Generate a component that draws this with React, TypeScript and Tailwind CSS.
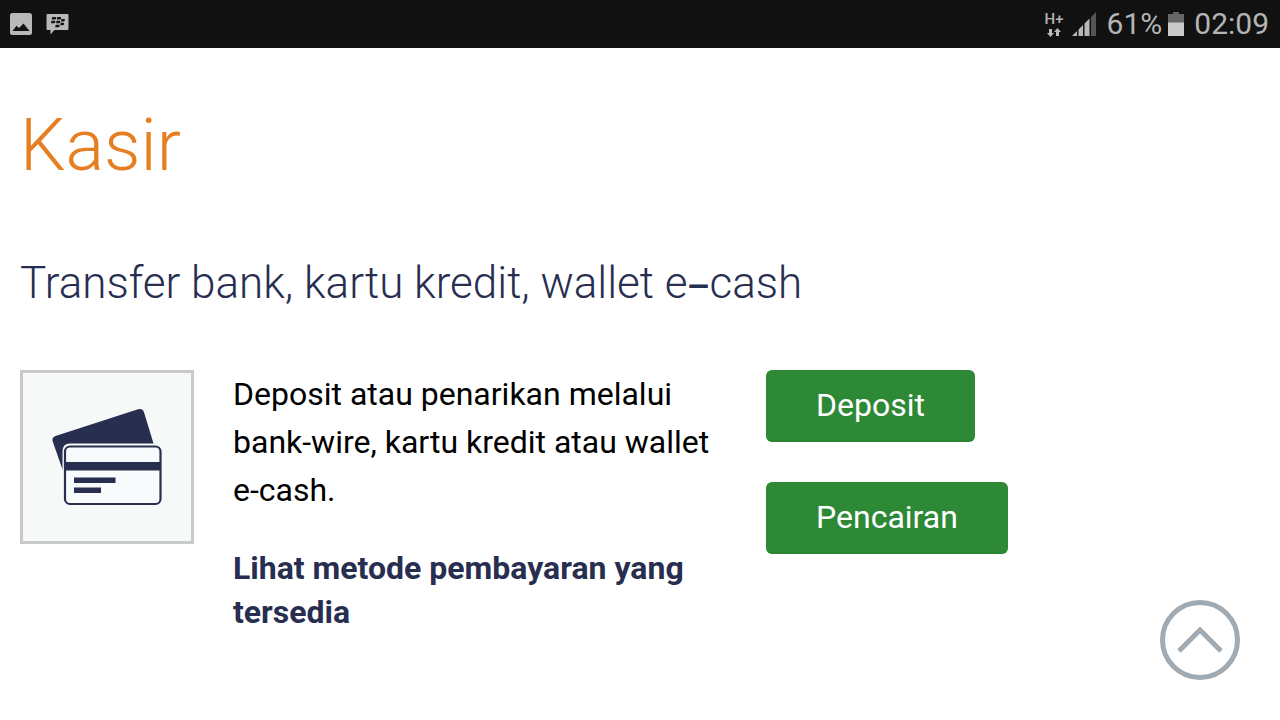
const actions = [
  { id: 1, label: "Deposit" },
  { id: 2, label: "Pencairan" },
];

function PictureIcon() {
  return (
    <svg width="22" height="22" viewBox="0 0 22 22" aria-hidden="true">
      <rect width="22" height="22" rx="2.5" fill="#b8b8b8" />
      <path
        d="M2.500 18 6.500 12.800 9 15 13.500 10.500 19.500 18Z"
        fill="#121212"
      />
    </svg>
  );
}

function MessengerIcon() {
  return (
    <svg width="24" height="22" viewBox="0 0 24 22" aria-hidden="true">
      <path
        d="M1.500 1H21.500Q22.500 1 22.500 2V16Q22.500 17 21.500 17H8.500L4.500 21.500V17H1.500Q.5 17 .5 16V2Q.5 1 1.500 1Z"
        fill="#b8b8b8"
      />
      <g fill="#121212">
        <path d="M6.300 4h3q1.200 0 .9 1.200-.3 1.300-1.600 1.300H5.800Z" />
        <path d="M11.300 4h3q1.200 0 .9 1.200-.3 1.300-1.600 1.300h-2.800Z" />
        <path d="M5.500 7.800h3q1.200 0 .9 1.200-.3 1.300-1.600 1.300H5Z" />
        <path d="M10.500 7.800h3q1.200 0 .9 1.200-.3 1.300-1.600 1.300H10Z" />
        <path d="M15.500 6h2.500q1.200 0 .9 1.200-.3 1.300-1.600 1.300H15Z" />
        <path d="M14.700 9.800h2.500q1.200 0 .9 1.200-.3 1.300-1.600 1.300h-2.300Z" />
        <path d="M9.700 11.700h3q1.200 0 .9 1.200-.3 1.300-1.600 1.300H9.200Z" />
      </g>
    </svg>
  );
}

function DataArrowsIcon() {
  return (
    <svg width="14" height="9" viewBox="0 0 14 9" fill="#b9b9b9" aria-hidden="true">
      <path d="M2 1H5V5H7L3.500 9 0 5H2Z" />
      <path d="M9 8H12V4H14L10.500 0 7 4H9Z" />
    </svg>
  );
}

function SignalIcon() {
  return (
    <svg width="24" height="24" viewBox="0 0 24 24" aria-hidden="true">
      <path d="M0 24 5 19V24ZM6.500 17.500 11 13V24H6.500ZM12.500 11.500 17.500 6.500V24H12.500Z" fill="#b9b9b9" />
      <path d="M19 5 24 0V24H19Z" fill="#555" />
    </svg>
  );
}

function BatteryIcon() {
  return (
    <svg width="16" height="24" viewBox="0 0 16 24" aria-hidden="true">
      <path d="M5 0H11V2H16V11H0V2H5Z" fill="#666" />
      <path d="M0 10.500H16V24H0Z" fill="#c9c9c9" />
    </svg>
  );
}

function CardsIcon() {
  return (
    <svg width="110" height="98" viewBox="0 0 110 98" aria-hidden="true">
      <path
        d="M10.500 61.500.7 33.500Q-.5 29.500 3.500 28L86 1.300Q90.500 0 92 4.300L101.500 35.500H18Q10.500 35.500 10.500 43.500Z"
        fill="#282e50"
      />
      <rect x="13" y="38.500" width="95.500" height="57.500" rx="5" fill="#f8fbfb" stroke="#282e50" strokeWidth="2.200" />
      <path d="M13 54H108.500V62.500H13ZM22 69.500H63.500V75H22ZM22 79.500H49V85H22Z" fill="#282e50" />
    </svg>
  );
}

function StatusBar() {
  return (
    <header className="flex h-12 items-center justify-between bg-[#111111] pr-[11px] pl-2.5 text-[#b4b4b4]">
      <div className="flex items-center gap-3.5">
        <PictureIcon />
        <MessengerIcon />
      </div>
      <div className="flex items-center text-[30px] leading-none">
        <div className="mr-2 flex flex-col items-center gap-0.5">
          <span className="text-[15px] leading-3.5 font-medium">H+</span>
          <DataArrowsIcon />
        </div>
        <SignalIcon />
        <span className="ml-[11px]">61%</span>
        <span className="mr-2.5 ml-1.5">
          <BatteryIcon />
        </span>
        <time>02:09</time>
      </div>
    </header>
  );
}

export default function App() {
  return (
    <div className="min-h-screen bg-white font-[Roboto,sans-serif]">
      <StatusBar />

      <main className="px-5 pt-[58px]">
        <h1 className="text-[72px] leading-20 font-light text-[#e67e22]">Kasir</h1>
        <h2 className="mt-[69px] text-[44px] leading-14 font-light text-[#282e50]">
          Transfer bank, kartu kredit, wallet e<span className="font-['Noto_Sans',sans-serif] leading-none font-normal">–</span>cash
        </h2>

        <section className="mt-[59px] grid grid-cols-[3fr_2fr] gap-x-[5px]">
          <div className="flex items-start gap-[39px] pr-8">
            <div className="flex size-[174px] shrink-0 items-center justify-center border-3 border-[#c8caca] bg-[#f6f9f8]">
              <CardsIcon />
            </div>
            <div className="text-[32px]">
              <p className="leading-12 text-black">
                Deposit atau penarikan melalui bank-wire, kartu kredit atau wallet e-cash.
              </p>
              <a href="#metode" className="mt-8 block leading-11 font-bold text-[#282e50]">
                Lihat metode pembayaran yang tersedia
              </a>
            </div>
          </div>

          {/* Actions */}
          <div className="flex flex-col items-start gap-10">
            {actions.map(({ id, label }) => (
              <button
                key={id}
                type="button"
                className="h-18 rounded-md border-b-2 border-[#2a8432] bg-[#2d8935] px-[50px] text-[32px] leading-none text-white"
              >
                {label}
              </button>
            ))}
          </div>
        </section>
      </main>

      <button
        type="button"
        aria-label="Kembali ke atas"
        className="fixed right-10 bottom-10 flex size-20 items-center justify-center rounded-full border-5 border-[#9faab3] bg-white"
      >
        <svg width="46" height="28" viewBox="0 0 46 28" fill="none" aria-hidden="true">
          <path d="M2 25 23 4 44 25" stroke="#9faab3" strokeWidth="5" />
        </svg>
      </button>
    </div>
  );
}
